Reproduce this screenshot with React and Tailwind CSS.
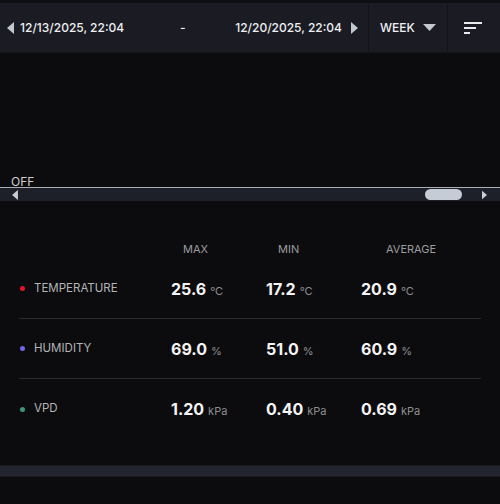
import React from 'react';

const rows = [
  { name: 'TEMPERATURE', dot: 'bg-[#e3132f]', unit: '°C', vals: ['25.6', '17.2', '20.9'] },
  { name: 'HUMIDITY', dot: 'bg-[#6e66ea]', unit: '%', vals: ['69.0', '51.0', '60.9'] },
  { name: 'VPD', dot: 'bg-[#3a9878]', unit: 'kPa', vals: ['1.20', '0.40', '0.69'] },
];

function Tri({ dir, className }) {
  const pts = {
    left: '7,0 7,12 0,6',
    right: '0,0 0,12 7,6',
  }[dir];
  return (
    <svg width="7" height="12" viewBox="0 0 7 12" className={className}>
      <polygon points={pts} fill="currentColor" />
    </svg>
  );
}

export default function App() {
  return (
    <div
      className="w-[500px] h-[504px] bg-[#0c0c0e] overflow-hidden text-white"
      style={{ fontFamily: 'Inter, "Liberation Sans", sans-serif' }}
    >
      {/* top bar */}
      <div className="h-[3px] bg-[#0e0f13]" />
      <div className="h-[50px] flex bg-[#1b1c23] border-b border-[#15161b]">
        <div className="flex-1 flex items-center pl-[7px] pr-[10px] text-[12px] font-medium text-[#eef0f3]">
          <Tri dir="left" className="text-[#c3c7ce]" />
          <span className="ml-[6px]">12/13/2025, 22:04</span>
          <span className="flex-1 text-center pl-[6px]">-</span>
          <span>12/20/2025, 22:04</span>
          <Tri dir="right" className="ml-[9px] text-[#c3c7ce]" />
        </div>
        <div className="w-[79px] flex items-center border-l border-[#131419] pl-[11px] text-[12px] font-medium text-[#eef0f3]">
          <span>WEEK</span>
          <svg width="13" height="7" viewBox="0 0 13 7" className="ml-[8px] text-[#c3c7ce]">
            <polygon points="0,0 13,0 6.5,7" fill="currentColor" />
          </svg>
        </div>
        <div className="w-[53px] flex items-center justify-center border-l border-[#131419]">
          <svg width="18" height="12" viewBox="0 0 18 12" className="text-[#e8eaee] -ml-[3px]">
            <rect x="0" y="0" width="18" height="2" fill="currentColor" />
            <rect x="0" y="5" width="12" height="2" fill="currentColor" />
            <rect x="0" y="10" width="6" height="2" fill="currentColor" />
          </svg>
        </div>
      </div>

      {/* chart area */}
      <div className="h-[134px] flex items-end pl-[11px]">
        <span className="text-[12px] leading-[10px] text-[#cfcfcf]">OFF</span>
      </div>
      <div className="h-[1px] bg-[#a9adb4]" />
      <div className="h-[13px] bg-[#1e2029] flex items-center pl-[12px] pr-[13px]">
        <Tri dir="left" className="text-[#c9ced6] w-[6px] h-[10px]" />
        <div className="flex-1" />
        <div className="w-[37px] h-[11px] rounded-full bg-[#c6ccd6]" />
        <div className="w-[20px]" />
        <Tri dir="right" className="text-[#c9ced6] w-[5px] h-[10px]" />
      </div>

      {/* stats */}
      <div className="mt-[38px] px-[19px]">
        <div className="h-[20px] grid grid-cols-[152px_95px_95px_1fr] items-center text-[11px] text-[#9b9b9e]">
          <div />
          <div className="pl-[12px]">MAX</div>
          <div className="pl-[12px]">MIN</div>
          <div className="pl-[25px]">AVERAGE</div>
        </div>
        {rows.map((r, i) => (
          <div
            key={r.name}
            className={`h-[60px] grid grid-cols-[152px_95px_95px_1fr] items-center ${i < 2 ? 'border-b border-[#2a2b31]' : ''}`}
          >
            <div className="flex items-center">
              <span className={`w-[5px] h-[5px] rounded-full ${r.dot} ml-[1px]`} />
              <span className="ml-[9px] text-[11.5px] text-[#b4b4b7]">{r.name}</span>
            </div>
            {r.vals.map((v) => (
              <div key={v} className="flex items-baseline">
                <span className="text-[16px] font-bold text-[#f4f4f5]">{v}</span>
                <span className="ml-[4px] text-[11px] text-[#8e8e92]">{r.unit}</span>
              </div>
            ))}
          </div>
        ))}
      </div>

      {/* bottom band */}
      <div className="mt-[26px] h-[12px] bg-[#22252d] border-y border-[#18191f]" />
    </div>
  );
}
